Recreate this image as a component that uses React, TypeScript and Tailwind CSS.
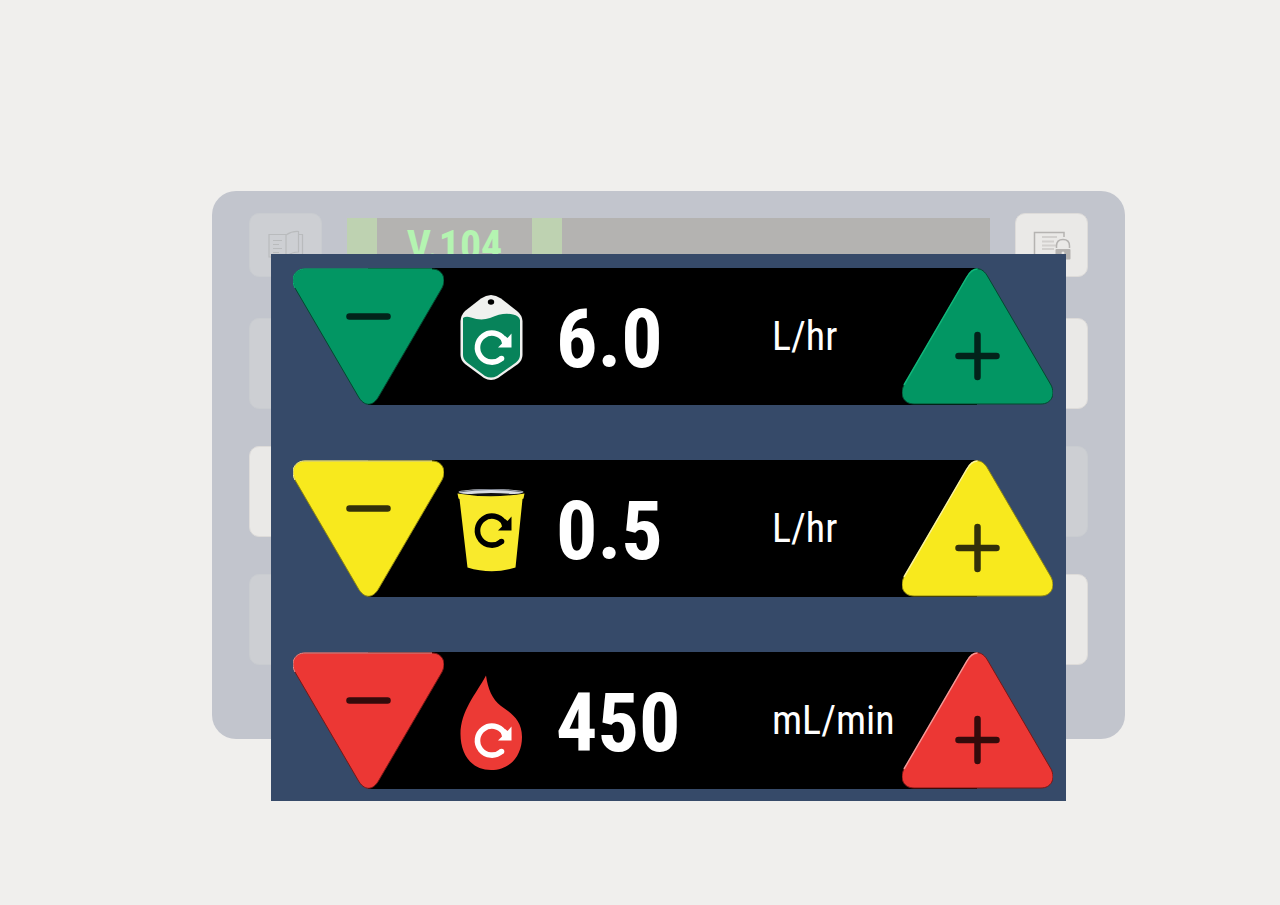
import React from 'react';

type Tone = {
  fill: string;
  light: string;
  dark: string;
  sign: string;
};

const green: Tone = { fill: '#029663', light: '#10b87c', dark: '#04492f', sign: '#02231a' };
const yellow: Tone = { fill: '#f8e91d', light: '#fcf59a', dark: '#8f8610', sign: '#33300a' };
const red: Tone = { fill: '#ec3734', light: '#f79896', dark: '#7a1715', sign: '#330b0b' };

// circular arrow centred on (35, 52)
const RefreshArrow: React.FC<{ color: string }> = ({ color }) => (
  <g>
    <path d="M44.500 62.500 A14.500 14.500 0 1 1 47 43.500" fill="none" stroke={color} strokeWidth="5.600" />
    <circle cx="44.500" cy="62.500" r="2.800" fill={color} />
    <path d="M54.500 37.500 V51.500 H41 L45 47.500 L44 44 L48 40 L50.500 42 Z" fill={color} />
  </g>
);

const BagIcon: React.FC = () => (
  <svg viewBox="0 -1 68 100" className="h-[100px] w-[68px]" aria-hidden="true">
    <path
      d="M34 7 Q39 7 44 10.500 L60 23 Q65 27 65.500 33 V67 Q65.500 72 61 76 L41 90 Q34 94 27 90 L8 76 Q3.500 72 3.500 67 V33 Q4 27 8 23 L24 10.500 Q29 7 34 7 Z"
      fill="#f0f1ef"
    />
    <path
      d="M6 30 Q9 28 14 29.500 Q24 33 33 30 Q46 24 56 26.500 Q62 27.500 63 32 V67 Q63 71 59 74.500 L40 88 Q34 91 28 88 L10 74.500 Q6 71 6 67 Z"
      fill="#07835a"
    />
    <ellipse cx="34" cy="14" rx="3.200" ry="2.700" fill="#000" />
    <g transform="translate(0 8)">
      <RefreshArrow color="#fff" />
    </g>
  </svg>
);

const CupIcon: React.FC = () => (
  <svg viewBox="0 0 68 100" className="h-[100px] w-[68px]" aria-hidden="true">
    <ellipse cx="34" cy="13" rx="32.500" ry="3" fill="#d9dce3" />
    <path d="M2 13 Q34 8 66 13" fill="none" stroke="#6c7280" strokeWidth="1" />
    <path d="M8 15.500 Q34 12.500 60 15.500 Q34 18.500 8 15.500 Z" fill="#111" />
    <path
      d="M0.500 14.500 Q34 20 67.500 14.500 L66.500 19.500 L65.500 20 L58.500 88.500 Q35 96 10.500 88.500 L2.500 20 L1.500 19.500 Z"
      fill="#f9ea2c"
    />
    <RefreshArrow color="#000" />
  </svg>
);

const DropIcon: React.FC = () => (
  <svg viewBox="0 -1 68 100" className="h-[100px] w-[68px]" aria-hidden="true">
    <path
      d="M29 3.500 C31 17 35 27 44 34 C54 41 65 48 65 65 C65 84 53 98 34 98 C15 98 3.500 83 3.500 62 C3.500 39 19 22 29 3.500 Z"
      fill="#ec3a35"
    />
    <g transform="translate(0 17)">
      <RefreshArrow color="#fff" />
    </g>
  </svg>
);

const MinusShape: React.FC<{ tone: Tone }> = ({ tone }) => (
  <>
    <rect x="75" y="0" width="76" height="137" fill="#000" />
    <path
      d="M12 1 H139 C149 1 154 10 149 20 L86 128 C80 139 71 139 65 128 L2 20 C-3 10 2 1 12 1 Z"
      fill={tone.fill}
      stroke={tone.dark}
      strokeWidth="1"
    />
    <path d="M2 20 C-3 10 2 1 12 1 H139" fill="none" stroke={tone.light} strokeWidth="1" />
    <path d="M56.500 48.500 H94.500" stroke={tone.sign} strokeWidth="6.500" strokeLinecap="round" />
  </>
);

const PlusShape: React.FC<{ tone: Tone }> = ({ tone }) => (
  <>
    <rect x="0" y="0" width="75" height="137" fill="#000" />
    <path
      d="M12 136 H139 C149 136 154 127 149 117 L86 9 C80 -2 71 -2 65 9 L2 117 C-3 127 2 136 12 136 Z"
      fill={tone.fill}
      stroke={tone.dark}
      strokeWidth="1"
    />
    <path d="M2 117 L65 9 C68 3.500 72 1 75.500 1" fill="none" stroke={tone.light} strokeWidth="1.500" />
    <path d="M56.500 88 H94.500 M75.500 67 V109" stroke={tone.sign} strokeWidth="6.500" strokeLinecap="round" />
  </>
);

const StepButton: React.FC<{ label: string; children: React.ReactNode }> = ({ label, children }) => (
  <button type="button" aria-label={label} className="shrink-0 cursor-pointer">
    <svg viewBox="0 0 151 137" className="block h-[137px] w-[151px]" aria-hidden="true">
      {children}
    </svg>
  </button>
);

type FlowRowProps = {
  name: string;
  value: string;
  unit: string;
  tone: Tone;
  icon: React.ReactNode;
};

const FlowRow: React.FC<FlowRowProps> = ({ name, value, unit, tone, icon }) => (
  <div className="flex">
    <StepButton label={`Decrease ${name}`}>
      <MinusShape tone={tone} />
    </StepButton>
    <div className="flex flex-1 items-center bg-black pl-[13px] text-white">
      {icon}
      <span className="ml-[31px] flex-1 pt-1 text-[82px] leading-none font-bold">{value}</span>
      <span className="w-[130px] text-[40px] leading-none whitespace-nowrap">{unit}</span>
    </div>
    <StepButton label={`Increase ${name}`}>
      <PlusShape tone={tone} />
    </StepButton>
  </div>
);

const BookIcon: React.FC = () => (
  <svg viewBox="0 0 38 30" className="h-[30px] w-[38px]" fill="none" stroke="#b9bbbd" strokeWidth="1.200" aria-hidden="true">
    <path d="M19 4.500 H2 V27 H19" />
    <path d="M19 27 V5 Q25 1 31.500 1.500 V22 Q24 22 19 27" />
    <path d="M31.500 4.500 H35.500 V27 H19" />
    <path d="M6 10.500 H15 M6 14.500 H12 M6 18.500 H15 M6 22.500 H12" />
  </svg>
);

const LockedListIcon: React.FC = () => (
  <svg viewBox="0 0 38 30" className="h-[30px] w-[38px]" fill="none" stroke="#b5b3b1" strokeWidth="1.500" aria-hidden="true">
    <path d="M31 7 V2.500 H1.500 V25 H24" />
    <path d="M9 7 H24 M9 11.500 H21 M9 15.500 H24 M9 19 H21" stroke="#d2d0ce" strokeWidth="2" />
    <path d="M23.500 18 V16 Q23.500 9.500 30 9.500 Q36.500 9.500 36.500 16 V18" strokeWidth="1.500" />
    <rect x="22.500" y="19" width="15" height="10.500" rx="1" fill="#b5b3b1" stroke="none" />
    <circle cx="30" cy="23" r="1.500" fill="#eae8e6" stroke="none" />
  </svg>
);

const KEY_BASE = 'flex w-[73px] justify-center rounded-[10px] border';
const KEY_ON = 'border-[#dddbd9] bg-[#eae9e7]';
const KEY_OFF = 'border-[#c9ccd0] bg-[#cdcfd3]';

const SideKey: React.FC<{ active?: boolean; label: string; children?: React.ReactNode }> = ({
  active,
  label,
  children,
}) => (
  <button
    type="button"
    aria-label={label}
    className={`${KEY_BASE} ${active ? KEY_ON : KEY_OFF} ${children ? 'h-16 pt-4' : 'h-[91px]'}`}
  >
    {children}
  </button>
);

const Device: React.FC = () => (
  <div className="flex justify-between gap-[25px] rounded-[24px] bg-[#c2c5cd] px-[37px] pt-[22px] pb-[74px]">
    <div className="flex flex-col">
      <SideKey label="Guide">
        <BookIcon />
      </SideKey>
      <div className="mt-[41px] flex flex-col gap-[37px]">
        <SideKey label="Left key 1" />
        <SideKey label="Left key 2" active />
        <SideKey label="Left key 3" />
      </div>
    </div>
    <div className="mt-[5px] flex h-14 flex-1 bg-[#b4b3b1]">
      <div className="w-[30px] bg-[#bed2b1]" />
      <div className="w-[155px] pt-1 text-center text-[42px] leading-[48px] font-bold text-[#b4f4b1]">V.104</div>
      <div className="w-[30px] bg-[#bed2b1]" />
    </div>
    <div className="flex flex-col">
      <SideKey label="Lock list" active>
        <LockedListIcon />
      </SideKey>
      <div className="mt-[41px] flex flex-col gap-[37px]">
        <SideKey label="Right key 1" active />
        <SideKey label="Right key 2" />
        <SideKey label="Right key 3" active />
      </div>
    </div>
  </div>
);

export default function App() {
  return (
    <main className="min-h-screen bg-[#f0efed] pt-[191px] pr-[155px] pb-[104px] pl-[212px] font-['Roboto_Condensed','DejaVu_Sans_Condensed',sans-serif]">
      <div className="relative">
        <Device />
        <section
          aria-label="Flow settings"
          className="absolute inset-x-[59px] top-[63px] flex flex-col gap-[55px] bg-[#364a69] pt-3.5 pr-[13px] pb-3 pl-[22px]"
        >
          <FlowRow name="dialysate flow" value="6.0" unit="L/hr" tone={green} icon={<BagIcon />} />
          <FlowRow name="effluent flow" value="0.5" unit="L/hr" tone={yellow} icon={<CupIcon />} />
          <FlowRow name="blood flow" value="450" unit="mL/min" tone={red} icon={<DropIcon />} />
        </section>
      </div>
    </main>
  );
}
